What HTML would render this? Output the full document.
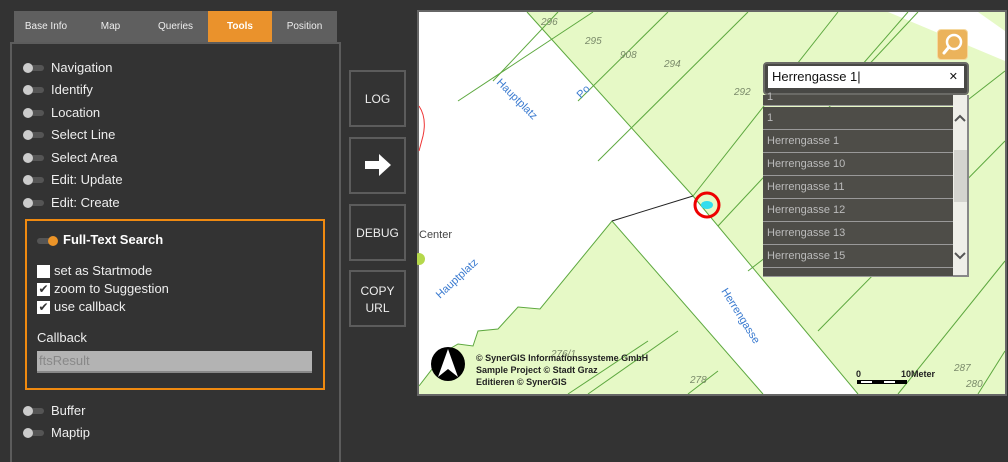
<!DOCTYPE html>
<html><head><meta charset="utf-8"><style>
*{margin:0;padding:0;box-sizing:border-box}
body{width:1008px;height:450px;background:#333;font-family:"Liberation Sans","DejaVu Sans",sans-serif;color:#eee;position:relative;overflow:hidden}
.tab{position:absolute;top:11px;height:31px;background:#5f5f5f;color:#eee;font-size:10px;text-align:center;line-height:31px}
.panel{position:absolute;left:10px;top:42px;width:331px;height:420px;border:2px solid #5c5c5c;border-bottom:none}
.it{position:absolute;left:51px;font-size:13px;color:#eee}
.tg{position:absolute;left:23px;width:21px;height:6px;border-radius:3px;background:#555}
.tg:before{content:"";position:absolute;left:0;top:-2px;width:10px;height:10px;border-radius:5px;background:#ccc}
.btn{position:absolute;left:349px;width:57px;height:57px;border:2px solid #5c5c5c;color:#eee;font-size:12px;text-align:center}
.cb{position:absolute;left:37px;width:13px;height:13px;background:#fff}
.cl{position:absolute;left:54px;font-size:13px;color:#eee}
.row{position:absolute;left:763px;width:190px;height:23px;background:#4e4d48;border-bottom:1.5px solid #999;color:#bbb;font-size:11px;line-height:22px;padding-left:4px}
</style></head><body>
<div class="tab" style="left:14px;width:64px">Base Info</div>
<div class="tab" style="left:78px;width:65px">Map</div>
<div class="tab" style="left:143px;width:65px">Queries</div>
<div class="tab" style="left:208px;width:64px;background:#ea922c;font-weight:bold;color:#fff">Tools</div>
<div class="tab" style="left:272px;width:65px">Position</div>
<div class="panel"></div>
<div class="tg" style="top:65px"></div><div class="it" style="top:60px">Navigation</div>
<div class="tg" style="top:87px"></div><div class="it" style="top:82px">Identify</div>
<div class="tg" style="top:110px"></div><div class="it" style="top:105px">Location</div>
<div class="tg" style="top:132px"></div><div class="it" style="top:127px">Select Line</div>
<div class="tg" style="top:155px"></div><div class="it" style="top:150px">Select Area</div>
<div class="tg" style="top:177px"></div><div class="it" style="top:172px">Edit: Update</div>
<div class="tg" style="top:200px"></div><div class="it" style="top:195px">Edit: Create</div>
<div style="position:absolute;left:25px;top:219px;width:300px;height:171px;border:2px solid #f08a10"></div>
<div style="position:absolute;left:37px;top:238px;width:20px;height:6px;border-radius:3px;background:#555"></div>
<div style="position:absolute;left:48px;top:236px;width:10px;height:10px;border-radius:5px;background:#ec9428"></div>
<div style="position:absolute;left:63px;top:232px;font-size:13px;font-weight:bold;color:#fff">Full-Text Search</div>
<div class="cb" style="top:265px"></div><div class="cl" style="top:263px">set as Startmode</div>
<div class="cb" style="top:283px;color:#333;font-size:12px;line-height:13px;text-align:center">✔</div><div class="cl" style="top:281px">zoom to Suggestion</div>
<div class="cb" style="top:301px;color:#333;font-size:12px;line-height:13px;text-align:center">✔</div><div class="cl" style="top:299px">use callback</div>
<div style="position:absolute;left:37px;top:330px;font-size:13px;color:#eee">Callback</div>
<div style="position:absolute;left:37px;top:351px;width:275px;height:22px;background:#b3b3b3;border-bottom:2px solid #888;color:#888;font-family:'Liberation Sans',sans-serif;font-size:13px;line-height:20px;padding-left:2px">ftsResult</div>
<div class="tg" style="top:408px"></div><div class="it" style="top:403px">Buffer</div>
<div class="tg" style="top:430px"></div><div class="it" style="top:425px">Maptip</div>
<div class="btn" style="top:70px;line-height:54px">LOG</div>
<div class="btn" style="top:137px"><svg width="53" height="53"><path d="M14 22h14v-7l12 11-12 11v-7H14z" fill="#fff"/></svg></div>
<div class="btn" style="top:204px;line-height:54px">DEBUG</div>
<div class="btn" style="top:270px;padding-top:11px;line-height:17px">COPY<br>URL</div>
<svg style="position:absolute;left:417px;top:10px" width="590" height="386" viewBox="-1 -1 590 386">
<rect x="-1" y="-1" width="590" height="386" fill="#666"/>
<rect x="1" y="1" width="586" height="382" fill="#e6f9c6"/>
<polygon points="1,1 109,1 275,185 440,383 345,383 194,210 122,298 100,296 80,318 60,320 55,335 40,333 28,340 1,375" fill="#fff"/>
<polygon points="470,1 560,1 587,20 587,50" fill="#fff"/>
<g stroke="#5da83f" stroke-width="1" fill="none">
<polyline points="109,1 275,185 440,383"/><polyline points="345,383 194,210 122,298 100,296 80,318 60,320 55,335 40,333 28,340 1,375"/>
<line x1="140" y1="1" x2="75" y2="70"/><line x1="175" y1="1" x2="40" y2="90"/><line x1="250" y1="1" x2="160" y2="90"/>
<line x1="330" y1="1" x2="180" y2="150"/><line x1="420" y1="1" x2="275" y2="185"/><line x1="500" y1="1" x2="300" y2="215"/>
<line x1="587" y1="60" x2="330" y2="260"/><line x1="587" y1="130" x2="400" y2="320"/><line x1="587" y1="250" x2="480" y2="383"/>
<line x1="587" y1="340" x2="560" y2="383"/><line x1="490" y1="1" x2="430" y2="70"/>
<line x1="230" y1="330" x2="150" y2="383"/><line x1="260" y1="320" x2="170" y2="383"/><line x1="300" y1="360" x2="270" y2="383"/>
</g>
<line x1="194" y1="210" x2="275" y2="185" stroke="#222" stroke-width="1"/>
<g font-family="Liberation Sans,sans-serif" font-size="10" fill="#7a8a6a" font-style="italic">
<text x="123" y="14">296</text><text x="167" y="33">295</text><text x="202" y="47">908</text><text x="246" y="56">294</text>
<text x="316" y="84">292</text><text x="133" y="346">276/1</text><text x="536" y="360">287</text><text x="272" y="372">278</text><text x="548" y="376">280</text>
</g>
<g font-family="Liberation Sans,sans-serif" font-size="11" fill="#3b7bd0">
<text transform="translate(78,72) rotate(45)">Hauptplatz</text>
<text transform="translate(22,288) rotate(-43)">Hauptplatz</text>
<text transform="translate(303,280) rotate(58)">Herrengasse</text>
<text transform="translate(163,88) rotate(-45)">Po</text>
</g>
<text x="1" y="227" font-family="Liberation Sans,sans-serif" font-size="11" fill="#444">Center</text>
<path d="M1 95 q8 12 4 30 l-4 15" stroke="#e33" fill="none"/>
<circle cx="1" cy="248" r="6" fill="#b5d84b"/>
<circle cx="289" cy="194" r="12" fill="none" stroke="#e00" stroke-width="3"/>
<ellipse cx="289" cy="194" rx="6" ry="4" fill="#3de"/>
<circle cx="30" cy="353" r="17" fill="#000"/><path d="M30 338 L20 366 L30 358 L40 366Z" fill="#fff"/>
<g font-family="Liberation Sans,sans-serif" font-size="9" font-weight="bold" fill="#222">
<text x="58" y="350">© SynerGIS Informationssysteme GmbH</text><text x="58" y="362">Sample Project © Stadt Graz</text><text x="58" y="374">Editieren © SynerGIS</text>
<text x="438" y="366">0</text><text x="483" y="366">10Meter</text></g>
<rect x="439" y="369" width="50" height="4" fill="#000"/><rect x="443" y="370" width="11" height="2" fill="#fff"/><rect x="466" y="370" width="11" height="2" fill="#fff"/>
</svg>
<div style="position:absolute;left:937px;top:29px;width:31px;height:31px;background:#ebb35b;border-radius:4px;border:1px solid #f5d9a0"><svg width="29" height="29"><circle cx="16" cy="12" r="7" fill="none" stroke="#fff" stroke-width="2.5"/><line x1="11" y1="17" x2="6" y2="23" stroke="#fff" stroke-width="3" stroke-linecap="round"/></svg></div>
<div style="position:absolute;left:763px;top:62px;width:206px;height:33px;background:#484845;border-radius:4px;border:2px solid #6a6a66"></div>
<div style="position:absolute;left:768px;top:66px;width:196px;height:22px;background:#fff;color:#111;font-family:'Liberation Sans',sans-serif;font-size:13px;line-height:22px;padding-left:4px">Herrengasse 1|<span style="position:absolute;right:6px;font-size:11px">✕</span></div>
<div class="row" style="top:95px;height:11px;line-height:4px">1</div>
<div class="row" style="top:107px">1</div>
<div class="row" style="top:130px">Herrengasse 1</div>
<div class="row" style="top:153px">Herrengasse 10</div>
<div class="row" style="top:176px">Herrengasse 11</div>
<div class="row" style="top:199px">Herrengasse 12</div>
<div class="row" style="top:222px">Herrengasse 13</div>
<div class="row" style="top:245px">Herrengasse 15</div>
<div class="row" style="top:268px;height:9px"></div>
<div style="position:absolute;left:953px;top:95px;width:16px;height:182px;background:#efefe9;border-right:2px solid #888;border-bottom:2px solid #888"><div style="position:absolute;left:1px;top:55px;width:13px;height:52px;background:#d4d4cf"></div>
<svg width="14" height="182" style="position:absolute;left:0;top:0"><path d="M2 26l5-5 5 5M2 158l5 5 5-5" stroke="#555" stroke-width="2" fill="none"/></svg></div>
</body></html>
